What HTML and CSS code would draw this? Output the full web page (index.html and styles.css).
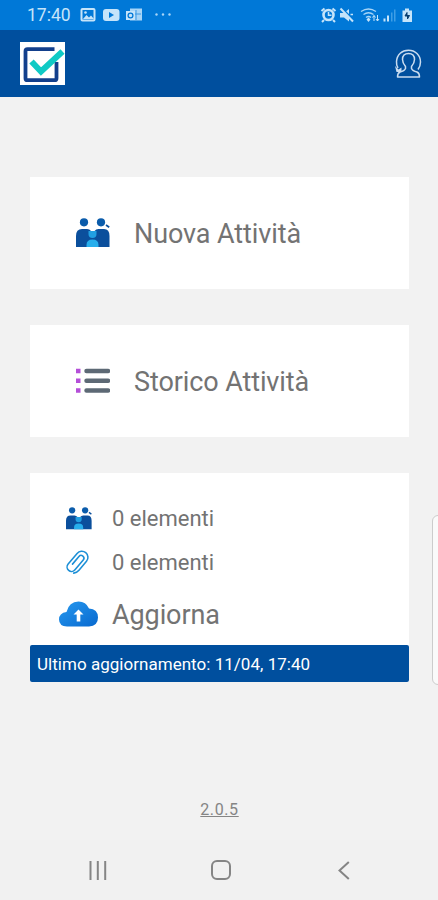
FILE: index.html
```
<!DOCTYPE html>
<html lang="it">
<head>
    <meta charset="UTF-8">
    <title>Attività</title>
    <link rel="stylesheet" href="styles.css">
</head>
<body>

    <svg width="0" height="0" class="simboli">
        <symbol id="persone" viewBox="0 0 34 30">
            <circle cx="8" cy="4.300" r="4.100" fill="#0b5cab"/>
            <circle cx="25" cy="4.300" r="4.100" fill="#0b5cab"/>
            <path d="M0 29V18Q0 11 6 11h5q2.500 0 4 2h3.500q1.500-2 4-2H28q5.500 0 5.500 7v11Z" fill="#0b4f9c"/>
            <path d="M12.500 13h8v3q0 4-4 4t-4-4z" fill="#219fe2"/>
            <path d="M10.500 29v-2q0-5.500 6-5.500t6 5.500v2z" fill="#27aeec"/>
            <path d="M30 7l3.200 2.200" stroke="#0b4f9c" stroke-width="1.800"/>
        </symbol>
    </svg>

    <div class="barra-stato">
        <span class="ora">17:40</span>
        <svg class="notifiche" width="94" height="16" viewBox="0 0 94 16">
            <rect x="1.500" y="2" width="13" height="11.500" rx="1" fill="none" stroke="#c5e4fa" stroke-width="2"/>
            <path d="M3 12l3.500-4 2.500 2.500 2-2 3 3.500z" fill="#c5e4fa"/>
            <circle cx="5.500" cy="5.500" r="1.300" fill="#c5e4fa"/>
            <rect x="23" y="2" width="16.500" height="12" rx="3" fill="#c5e4fa"/>
            <path d="M29 5v6l5-3z" fill="#0078d7"/>
            <path d="M50 1.500h12v12H50z" fill="#a8d5f7"/>
            <path d="M52 7h9M56 3v10" stroke="#3a98e3" stroke-width="1"/>
            <rect x="46" y="4" width="9" height="9" fill="#c5e4fa"/>
            <circle cx="50.500" cy="8.500" r="2.400" fill="none" stroke="#0078d7" stroke-width="1.300"/>
            <g fill="#a8d5f7"><circle cx="76.500" cy="7.500" r="1.200"/><circle cx="83" cy="7.500" r="1.200"/><circle cx="89.500" cy="7.500" r="1.200"/></g>
        </svg>
        <svg class="sistema" width="94" height="16" viewBox="0 0 94 16">
            <path d="M1.500 4l3-2.500M15.500 4l-3-2.500M4 13l-2 2M13 13l2 2" stroke="#c5e4fa" stroke-width="2"/>
            <circle cx="8.500" cy="8" r="5" fill="#0078d7" stroke="#c5e4fa" stroke-width="2.600"/>
            <path d="M8.500 5v3.300h3" fill="none" stroke="#c5e4fa" stroke-width="1.500"/>
            <path d="M20 6h4l5-4v12.500l-5-4h-4z" fill="#c5e4fa"/>
            <path d="M22 1.500l12 12" stroke="#0078d7" stroke-width="2"/>
            <path d="M20.500 1.500l12.500 13" stroke="#c5e4fa" stroke-width="2"/>
            <path d="M30.500 7.500H33" stroke="#c5e4fa" stroke-width="1.500"/>
            <g fill="none" stroke="#a8d5f7" stroke-width="1.300">
                <path d="M41 4.500q7.500-5 15 0M43.500 7.500q5-3.500 10 0M46 10.500q2.500-2 5 0"/>
            </g>
            <path d="M48.500 10.500l2 2-2 2.500-2-2.500z" fill="#c5e4fa"/>
            <path d="M54 14V8.500m-1.500 2L54 8.500l1.500 2M57.500 8v6m-1.500-2l1.500 2 1.500-2" fill="none" stroke="#c5e4fa"/>
            <path d="M63.500 11.500h2v3h-2zM67 8.500h2v6h-2z" fill="#c5e4fa"/>
            <path d="M71 5.500h1.500v9H71zM74 2.500h1.500v12H74z" fill="#3f9ee6"/>
            <path d="M82.500 3.500H85v-2h4v2h3v11.500h-9.500z" fill="#c5e4fa"/>
            <path d="M87 5.500v3h2.500L87.500 12v-3H85z" fill="#073d6e" stroke="#073d6e"/>
        </svg>
    </div>

    <header class="testata">
        <svg class="logo" width="45" height="43" viewBox="0 0 45 43">
            <path d="M0 0h45v43H0z" fill="#fff"/>
            <path d="M34.500 7.200H7.500q-2 0-2 2v27q0 2 2 2h27q2 0 2-2V20" fill="none" stroke="#123f8c" stroke-width="3.800"/>
            <path d="M11.500 19.500l9.500 10L42.500 9.500" fill="none" stroke="#0fcac5" stroke-width="6"/>
        </svg>
        <svg class="profilo" width="27" height="30" viewBox="0 0 27 30" fill="none" stroke="#c9dcf0" stroke-width="1.500" stroke-linejoin="round">
            <path d="M3 19Q1.200 16 1.500 12.500C2 5.500 7 1.200 13.500 1.200S25.500 6 25.500 13c0 3-1 5.500-2.500 7.500"/>
            <path d="M10.500 19.500v-2Q7.500 14 7.500 10.500q0-6 6-6t6 6q0 3.500-3 7v2q1 2.500 5.500 3.500 2.500 1 2.500 5h-22q0-4 2.500-5 4.500-1 5.500-3.500z"/>
            <path d="M0 17l3.500 3.500 3-2v4.500H1.500z" fill="#c9dcf0" stroke="none"/>
        </svg>
    </header>

    <main class="contenuto">
        <div class="card">
            <svg width="34" height="30"><use href="#persone"/></svg>
            <span class="titolo">Nuova Attività</span>
        </div>

        <div class="card">
            <svg width="34" height="26" viewBox="0 0 34 26">
                <path d="M0 .8h4.500v4.500H0zM0 10.500h4.500V15H0zM0 20.300h4.500v4.500H0z" fill="#b44ed8"/>
                <path d="M10.500 3h21.500M10.500 12.800h21.500M10.500 22.500h21.500" stroke="#5d6975" stroke-width="4.500" stroke-linecap="round"/>
            </svg>
            <span class="titolo">Storico Attività</span>
        </div>

        <div class="riepilogo">
            <div class="riga">
                <span class="icona"><svg width="26" height="23"><use href="#persone"/></svg></span>
                <span class="elementi">0 elementi</span>
            </div>
            <div class="riga">
                <span class="icona">
                    <svg class="graffetta" width="27" height="29" viewBox="0 0 24 26">
                        <path transform="rotate(40 12 13)" d="M17.500 17.500V7a5.500 5.500 0 0 0-11 0v12.500a4 4 0 0 0 8 0V8a2.500 2.500 0 0 0-5 0v9M17.500 17.500a7 7 0 0 1-2 5" fill="none" stroke="#1c8fd6" stroke-width="1.400" stroke-linecap="round"/>
                    </svg>
                </span>
                <span class="elementi">0 elementi</span>
            </div>
            <div class="riga aggiorna">
                <span class="icona">
                    <svg width="39" height="26" viewBox="0 0 39 26">
                        <defs>
                            <linearGradient id="nuvola" x1="0" y1="0" x2="1" y2="1">
                                <stop offset="0" stop-color="#2799ef"/>
                                <stop offset="1" stop-color="#0869cf"/>
                            </linearGradient>
                        </defs>
                        <path d="M8 25.500Q0 25 0 18.500 0 12 7.500 11 10 .5 19.500.5 27 .5 30 7.500q9 .5 9 9 0 8.500-9 9z" fill="url(#nuvola)"/>
                        <path d="M19.500 8.500l5 5h-3.200v7h-3.600v-7h-3.200z" fill="#fff"/>
                    </svg>
                </span>
                <span class="titolo">Aggiorna</span>
            </div>
            <div class="ultimo">Ultimo aggiornamento: 11/04, 17:40</div>
        </div>

        <a class="versione">2.0.5</a>
    </main>

    <div class="pannello"></div>

    <nav class="navigazione">
        <svg width="18" height="19" viewBox="0 0 18 19"><path d="M1.500 0v19M8.800 0v19M16.200 0v19" stroke="#858585" stroke-width="2"/></svg>
        <svg class="home" width="20" height="20" viewBox="0 0 20 20"><rect x="1" y="1" width="18" height="18" rx="5" fill="none" stroke="#858585" stroke-width="2"/></svg>
        <svg width="12" height="19" viewBox="0 0 12 19"><path d="M10.800 1L1.500 9.500l9.300 8.500" fill="none" stroke="#858585" stroke-width="2"/></svg>
    </nav>

</body>
</html>
```
FILE: styles.css
```
body {
    font-family: Roboto, sans-serif;
    margin: 0;
    height: 900px;
    display: flex;
    flex-direction: column;
    background: #f2f2f2;
    color: #737373;
    position: relative;
    overflow: hidden;
}
svg {
    display: block;
    flex-shrink: 0;
}
.simboli {
    position: absolute;
}
.barra-stato {
    height: 30px;
    box-sizing: border-box;
    padding: 0 24px 0 27px;
    display: flex;
    align-items: center;
    background: #0078d7;
}
.ora {
    width: 53px;
    font-size: 17.5px;
    color: #c5e4fa;
}
.sistema {
    margin-left: auto;
}
.testata {
    height: 67px;
    box-sizing: border-box;
    padding: 0 16px 0 20px;
    display: flex;
    align-items: center;
    justify-content: space-between;
    background: #004f9e;
}
.contenuto {
    flex: 1;
    padding: 80px 29px 0 30px;
    display: flex;
    flex-direction: column;
}
.card {
    height: 112px;
    margin-bottom: 36px;
    box-sizing: border-box;
    padding-left: 46px;
    display: flex;
    align-items: center;
    gap: 24px;
    background: #fff;
}
.titolo {
    padding-top: 2px;
    font-size: 27px;
    letter-spacing: -0.1px;
}
.riepilogo {
    height: 209px;
    box-sizing: border-box;
    padding-top: 23px;
    display: flex;
    flex-direction: column;
    background: #fff;
}
.riga {
    height: 44px;
    padding-left: 29px;
    display: flex;
    align-items: center;
    gap: 14px;
}
.riga.aggiorna {
    height: 60px;
}
.icona {
    width: 39px;
    display: flex;
    justify-content: center;
}
.graffetta {
    margin-right: 2px;
}
.elementi {
    font-size: 22px;
}
.ultimo {
    margin-top: auto;
    height: 37px;
    padding-left: 7px;
    border-radius: 2px;
    line-height: 38px;
    font-size: 17px;
    letter-spacing: 0.03px;
    color: #fff;
    background: #004f9e;
}
.versione {
    align-self: center;
    margin-top: 118px;
    font-size: 16px;
    letter-spacing: 0.6px;
    color: #858585;
    text-decoration: underline;
}
.pannello {
    position: absolute;
    top: 515px;
    right: -6px;
    width: 10px;
    height: 168px;
    border: 1px solid #ccc;
    border-radius: 6px;
    background: #fafafa;
}
.navigazione {
    height: 60px;
    box-sizing: border-box;
    padding: 0 88px 0 89px;
    display: flex;
    align-items: center;
    justify-content: space-between;
    background: #f1f1f1;
}
.home {
    margin-right: 4px;
}
```
